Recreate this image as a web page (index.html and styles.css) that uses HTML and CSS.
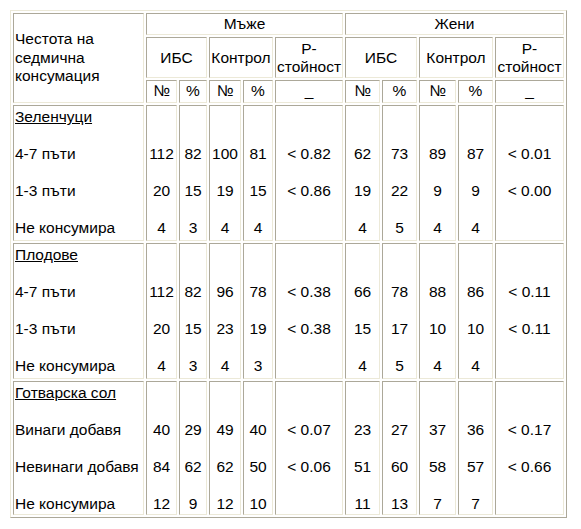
FILE: index.html
```html
<!DOCTYPE html>
<html lang="bg">
<head>
<meta charset="utf-8">
<title>Честота на седмична консумация</title>
<link rel="stylesheet" href="styles.css">
</head>
<body>
<table class="data">
  <tr class="h1">
    <td class="label w0" rowspan="3">Честота на<br>седмична<br>консумация</td>
    <td colspan="5">Мъже</td>
    <td colspan="5">Жени</td>
  </tr>
  <tr class="h2">
    <td colspan="2">ИБС</td>
    <td colspan="2">Контрол</td>
    <td>P-<br>стойност</td>
    <td colspan="2">ИБС</td>
    <td colspan="2">Контрол</td>
    <td>P-<br>стойност</td>
  </tr>
  <tr class="h3">
    <td class="w1">№</td>
    <td class="w2">%</td>
    <td class="w3">№</td>
    <td class="w4">%</td>
    <td class="w5">_</td>
    <td class="w6">№</td>
    <td class="w7">%</td>
    <td class="w8">№</td>
    <td class="w9">%</td>
    <td class="w10">_</td>
  </tr>
  <tr class="b1">
    <td class="label"><u>Зеленчуци</u><br><br>4-7 пъти<br><br>1-3 пъти<br><br>Не консумира</td>
    <td><br><br>112<br><br>20<br><br>4</td>
    <td><br><br>82<br><br>15<br><br>3</td>
    <td><br><br>100<br><br>19<br><br>4</td>
    <td><br><br>81<br><br>15<br><br>4</td>
    <td><br><br>&lt; 0.82<br><br>&lt; 0.86</td>
    <td><br><br>62<br><br>19<br><br>4</td>
    <td><br><br>73<br><br>22<br><br>5</td>
    <td><br><br>89<br><br>9<br><br>4</td>
    <td><br><br>87<br><br>9<br><br>4</td>
    <td><br><br>&lt; 0.01<br><br>&lt; 0.00</td>
  </tr>
  <tr class="b2">
    <td class="label"><u>Плодове</u><br><br>4-7 пъти<br><br>1-3 пъти<br><br>Не консумира</td>
    <td><br><br>112<br><br>20<br><br>4</td>
    <td><br><br>82<br><br>15<br><br>3</td>
    <td><br><br>96<br><br>23<br><br>4</td>
    <td><br><br>78<br><br>19<br><br>3</td>
    <td><br><br>&lt; 0.38<br><br>&lt; 0.38</td>
    <td><br><br>66<br><br>15<br><br>4</td>
    <td><br><br>78<br><br>17<br><br>5</td>
    <td><br><br>88<br><br>10<br><br>4</td>
    <td><br><br>86<br><br>10<br><br>4</td>
    <td><br><br>&lt; 0.11<br><br>&lt; 0.11</td>
  </tr>
  <tr class="b3">
    <td class="label"><u>Готварска сол</u><br><br>Винаги добавя<br><br>Невинаги добавя<br><br>Не консумира</td>
    <td><br><br>40<br><br>84<br><br>12</td>
    <td><br><br>29<br><br>62<br><br>9</td>
    <td><br><br>49<br><br>62<br><br>12</td>
    <td><br><br>40<br><br>50<br><br>10</td>
    <td><br><br>&lt; 0.07<br><br>&lt; 0.06</td>
    <td><br><br>23<br><br>51<br><br>11</td>
    <td><br><br>27<br><br>60<br><br>13</td>
    <td><br><br>37<br><br>58<br><br>7</td>
    <td><br><br>36<br><br>57<br><br>7</td>
    <td><br><br>&lt; 0.17<br><br>&lt; 0.66</td>
  </tr>
</table>
</body>
</html>
```

FILE: styles.css
```css
html, body {
  margin: 0;
  padding: 0;
  background: #ffffff;
}

body {
  padding: 10px 0 0 10px;
  font-family: "Liberation Sans", Arial, sans-serif;
  font-size: 15.5px;
  color: #000000;
}

.data {
  border-collapse: separate;
  border-spacing: 2px;
  border: 1px solid;
  border-color: #ece9d8 #aca899 #aca899 #ece9d8;
}

.data td {
  box-sizing: border-box;
  border: 1px solid;
  border-color: #aca899 #ece9d8 #ece9d8 #aca899;
  padding: 1px;
  text-align: center;
  vertical-align: middle;
  line-height: 18.4px;
  white-space: nowrap;
}

.data td.label {
  text-align: left;
}

.h1 { height: 22px; }
.h2 { height: 41px; }
.h3 { height: 21px; }

.b1 td, .b2 td, .b3 td {
  vertical-align: top;
  padding-top: 2.6px;
}
.b1, .b2 { height: 136px; }
.b3 { height: 134px; }

.w0 { width: 131px; }
.w1 { width: 31px; }
.w2 { width: 28px; }
.w3 { width: 32px; }
.w4 { width: 30px; }
.w5 { width: 68px; }
.w6 { width: 35px; }
.w7 { width: 35px; }
.w8 { width: 37px; }
.w9 { width: 35px; }
.w10 { width: 69px; }
```
